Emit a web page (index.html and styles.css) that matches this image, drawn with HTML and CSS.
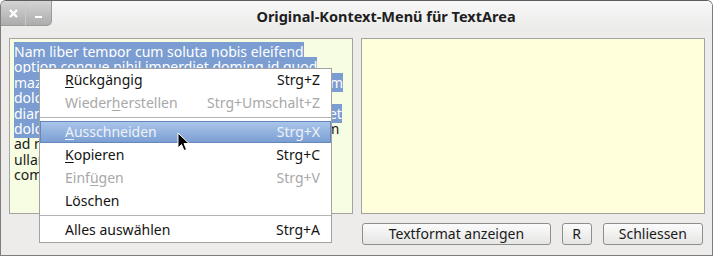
FILE: index.html
```html
<!DOCTYPE html>
<html lang="de">
<head>
  <meta charset="UTF-8" />
  <title>Original-Kontext-Menü für TextArea</title>
  <link rel="stylesheet" href="styles.css">
</head>
<body>
  <div class="window">
    <div class="titlebar">
      <div class="wm-buttons">
        <span class="wm-btn close">
          <svg width="9" height="9" viewBox="0 0 9 9"><path d="M1 1 L8 8 M8 1 L1 8" stroke="#fff" stroke-width="2.4"/></svg>
        </span>
        <span class="wm-btn min"><span class="min-bar"></span></span>
      </div>
      <div class="title">Original-Kontext-Menü für TextArea</div>
    </div>

    <div class="content">
      <div class="textarea text-left">
        <div class="line"><span class="sel">Nam liber tempor cum soluta nobis eleifend</span></div>
        <div class="line"><span class="sel">option congue nihil imperdiet doming id quod</span></div>
        <div class="line"><span class="sel">mazim placerat facer possim assum. Lorem ipsum</span></div>
        <div class="line"><span class="sel">dolor sit amet, consectetuer adipiscing elit,</span></div>
        <div class="line"><span class="sel">diam nonummy nibh euismod tincidunt ut laoreet</span></div>
        <div class="line"><span class="sel">dolore magna aliquam erat volutpat.</span> Ut wisi enim</div>
        <div class="line">ad minim veniam, quis nostrud exerci tation</div>
        <div class="line">ullamcorper suscipit lobortis nisl ut aliquip ex ea</div>
        <div class="line">commodo consequat.</div>
      </div>
      <div class="textarea text-right"></div>

      <div class="button-row">
        <button class="btn btn-wide">Textformat anzeigen</button>
        <button class="btn btn-small">R</button>
        <button class="btn btn-close">Schliessen</button>
      </div>
    </div>

    <div class="context-menu">
      <div class="menu-item"><span><u>R</u>ückgängig</span><span>Strg+Z</span></div>
      <div class="menu-item disabled"><span>Wieder<u>h</u>erstellen</span><span>Strg+Umschalt+Z</span></div>
      <div class="menu-sep"></div>
      <div class="menu-item active"><span><u>A</u>usschneiden</span><span>Strg+X</span></div>
      <div class="menu-item"><span><u>K</u>opieren</span><span>Strg+C</span></div>
      <div class="menu-item disabled"><span>Einf<u>ü</u>gen</span><span>Strg+V</span></div>
      <div class="menu-item"><span>Löschen</span><span></span></div>
      <div class="menu-sep"></div>
      <div class="menu-item"><span>Alles auswählen</span><span>Strg+A</span></div>
    </div>

    <svg class="pointer" width="14" height="21" viewBox="0 0 14 21">
      <path d="M1 1 L1 16 L4.5 12.5 L7 18.5 L9.5 17.5 L7 11.5 L12 11.5 Z" fill="#000" stroke="#fff" stroke-width="1" stroke-linejoin="round"/>
    </svg>
  </div>
</body>
</html>
```
FILE: styles.css
```css
body {
  margin: 0;
  background: #fff;
  font-family: 'Noto Sans', 'DejaVu Sans', sans-serif;
}
.window {
  position: relative;
  width: 713px;
  height: 256px;
  box-sizing: border-box;
  border: 1px solid #7d7d7d;
  border-top-color: #5e5e5e;
  border-radius: 6px 6px 0 0;
  background: #edeceb;
  overflow: hidden;
}
.titlebar {
  display: flex;
  height: 30px;
  background: linear-gradient(#f7f7f7, #ebebea);
}
.wm-buttons {
  display: flex;
  align-self: flex-start;
  height: 25px;
  margin-top: -1px;
  margin-left: -1px;
}
.wm-btn {
  display: flex;
  align-items: center;
  justify-content: center;
  width: 26px;
  height: 26px;
  background: linear-gradient(#d4d4d4, #acacac);
  box-sizing: border-box;
  border: 1px solid #9b9b9b;
}
.wm-btn.close {
  border-radius: 5px 0 0 0;
  border-right-color: #c9c9c9;
}
.wm-btn.min {
  border-left: none;
  border-radius: 0 0 5px 0;
}
.min-bar {
  width: 7px;
  height: 2px;
  margin-top: 8px;
  background: #fff;
}
.title {
  flex: 1;
  text-align: center;
  font-weight: bold;
  font-size: 14.5px;
  color: #1e1e1e;
  line-height: 31px;
  padding-left: 8px;
}
.content {
  display: grid;
  grid-template-columns: 344px 344px;
  grid-template-rows: 176px 22px;
  column-gap: 8px;
  row-gap: 9px;
  padding: 7px 7px 0 8px;
}
.textarea {
  border: 1px solid #a3a3a3;
  box-sizing: border-box;
  overflow: hidden;
}
.text-left {
  background: #f6fde2;
  padding: 5px 4px;
  font-size: 14px;
  line-height: 15.4px;
  color: #1a1a1a;
  white-space: nowrap;
}
.text-right {
  background: #ffffdc;
}
.sel {
  background: #7b9dd1;
  color: #fff;
}
.button-row {
  grid-column: 2;
  display: flex;
  gap: 11px;
  padding: 0 2px 0 1px;
}
.btn {
  height: 22px;
  padding: 0;
  border: 1px solid #8e8e8e;
  border-radius: 3px;
  background: linear-gradient(#fbfbfb, #e5e5e4);
  font-family: 'Noto Sans', sans-serif;
  font-size: 14px;
  color: #1a1a1a;
  line-height: 18px;
}
.btn-wide {
  width: 190px;
}
.btn-small {
  width: 30px;
}
.btn-close {
  width: 101px;
}
.context-menu {
  position: absolute;
  left: 38px;
  top: 67px;
  width: 293px;
  box-sizing: border-box;
  border: 1px solid #a2a2a2;
  background: #fff;
  font-size: 14px;
}
.menu-item {
  display: flex;
  justify-content: space-between;
  height: 23px;
  line-height: 22px;
  padding: 0 11px 0 25px;
  color: #141414;
}
.menu-item.disabled {
  color: #a8a8a8;
}
.menu-item.active {
  height: 22px;
  line-height: 20px;
  margin-bottom: 1px;
  box-sizing: border-box;
  border: 1px solid #6487bd;
  background: linear-gradient(#a9c5ea, #7c9fd3);
  color: #eef2f8;
  padding-left: 24px;
  padding-right: 10px;
}
.menu-item u {
  text-decoration-thickness: 1px;
  text-underline-offset: 2px;
}
.menu-sep {
  height: 1px;
  margin: 2px 0 3px;
  background: #b3b3b3;
}
.pointer {
  position: absolute;
  left: 176px;
  top: 131px;
}
```
